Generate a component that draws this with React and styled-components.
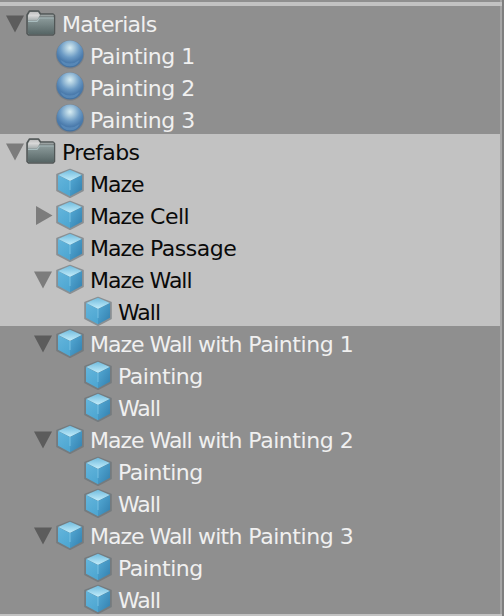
import React from "react";
import styled, { createGlobalStyle } from "styled-components";

const Global = createGlobalStyle`
  body { margin: 0; background: #8f8f8f; }
`;

const Panel = styled.div`
  width: 504px;
  height: 616px;
  display: flex;
  background: #8f8f8f;
  overflow: hidden;
`;

const Tree = styled.div`
  width: 500px;
  display: flex;
  flex-direction: column;
`;

const Edge = styled.div`
  width: 2px;
  background: #a6a6a6;
`;

const Gutter = styled.div`
  width: 2px;
  background: #7f7f7f;
`;

const TopLine = styled.div`
  height: 4px;
  margin: 2px -2px 0 0;
  background: #c2c2c2;
  flex: none;
  z-index: 1;
`;

const BottomLine = styled.div`
  height: 2px;
  margin-right: -2px;
  background: #c2c2c2;
  flex: none;
  z-index: 1;
`;

const Group = styled.div`
  flex: none;
  background: ${(p) => (p.$light ? "#c2c2c2" : "#8f8f8f")};
  color: ${(p) => (p.$light ? "#0a0a0a" : "#f0f0f0")};
`;

const Row = styled.div`
  height: 32px;
  display: flex;
  align-items: flex-start;
  padding-left: ${(p) => p.$indent}px;
`;

const ArrowSlot = styled.div`
  width: 20px;
  height: 32px;
  flex: none;
  color: ${(p) => (p.$light ? "#7c7c7c" : "#5c5c5c")};
`;

const IconSlot = styled.div`
  box-sizing: border-box;
  width: 36px;
  height: 32px;
  flex: none;
  padding-left: ${(p) => p.$inset}px;
`;

const Drawing = styled.svg`
  display: block;
  overflow: visible;
`;

const Label = styled.span`
  padding-top: 3px;
  font: 22px/32px "DejaVu Sans", sans-serif;
  white-space: pre;
`;

const Word = styled.span`
  letter-spacing: ${(p) => p.$track}px;
`;

function Arrow({ open }) {
  return (
    <Drawing width="20" height="32" viewBox="0 0 20 32">
      <path d={open ? "M0 9.5H18L9 26.5Z" : "M2 8V27L18.5 17.5Z"} fill="currentColor" />
    </Drawing>
  );
}

function Folder() {
  return (
    <Drawing width="30" height="32" viewBox="0 0 30 32">
      <defs>
        <linearGradient id="folderFront" x1="0" y1="0" x2="0" y2="1">
          <stop offset="0" stopColor="#8a9999" />
          <stop offset="1" stopColor="#566565" />
        </linearGradient>
        <linearGradient id="folderTab" x1="0" y1="0" x2="0" y2="1">
          <stop offset="0" stopColor="#c0c0c0" />
          <stop offset="0.4" stopColor="#d8d8d8" />
          <stop offset="1" stopColor="#a5adad" />
        </linearGradient>
      </defs>
      <path d="M1 9L3.5 5H12.5L14.5 8H27L28.5 9.5V27.5L27 29H2.5L1 27.5Z" fill="#7d8686" stroke="#505656" strokeWidth="1.5" strokeLinejoin="round" />
      <path d="M2 9.5L4 6H12L14 9L11 14.5H2Z" fill="url(#folderTab)" />
      <path d="M14.5 9.3H27.7" stroke="#a2a8a8" strokeWidth="1" />
      <path d="M2 15.5H11L13.5 12.5H28V27L26.5 28.3H3.5L2 27Z" fill="url(#folderFront)" />
      <path d="M2 15.3H11L13.5 12H28" fill="none" stroke="#a9bdbf" strokeWidth="1.2" />
    </Drawing>
  );
}

function Sphere() {
  return (
    <Drawing width="30" height="32" viewBox="0 0 30 32">
      <defs>
        <radialGradient id="ballShade" cx="0.5" cy="0.27" r="0.75">
          <stop offset="0" stopColor="#d8edf3" />
          <stop offset="0.2" stopColor="#acccdf" />
          <stop offset="0.48" stopColor="#6c9bc5" />
          <stop offset="0.72" stopColor="#4c7cad" />
          <stop offset="1" stopColor="#42709f" />
        </radialGradient>
      </defs>
      <circle cx="14" cy="16.5" r="14.2" fill="#70777e" opacity="0.6" />
      <circle cx="14" cy="16" r="13.4" fill="url(#ballShade)" />
      <path d="M4.5 22Q14 29 23.5 22Q21 28.3 14 28.3Q7 28.3 4.5 22Z" fill="#6a9dcb" opacity="0.45" />
    </Drawing>
  );
}

function Cube() {
  return (
    <Drawing width="30" height="32" viewBox="0 0 30 32">
      <defs>
        <linearGradient id="cubeTop" x1="0" y1="0" x2="0" y2="1">
          <stop offset="0" stopColor="#70bbdd" />
          <stop offset="1" stopColor="#c4eefc" />
        </linearGradient>
        <linearGradient id="cubeLeft" x1="0" y1="0" x2="0.5" y2="1">
          <stop offset="0" stopColor="#64b5dc" />
          <stop offset="1" stopColor="#4fa7d2" />
        </linearGradient>
        <linearGradient id="cubeRight" x1="0" y1="0" x2="1" y2="1">
          <stop offset="0" stopColor="#55abd6" />
          <stop offset="1" stopColor="#327fae" />
        </linearGradient>
      </defs>
      <path d="M14 3.5L27 8.5V24.5L14 31.3L1 24.5V8.5Z" fill="#646e74" stroke="#646e74" strokeWidth="1.6" strokeLinejoin="round" opacity="0.6" />
      <path d="M14 3.8L26 9L14 15L2 9Z" fill="url(#cubeTop)" />
      <path d="M2 9L14 15V30.2L2 23.8Z" fill="url(#cubeLeft)" />
      <path d="M26 9L14 15V30.2L26 23.8Z" fill="url(#cubeRight)" />
      <path d="M14 15V24" stroke="#80c6e7" strokeWidth="0.8" />
    </Drawing>
  );
}

const icons = { folder: Folder, sphere: Sphere, cube: Cube };
const indents = [6, 34, 62];
const tracking = { Maze: -1, Wall: -1, Materials: -0.7, Prefabs: -0.6, with: -0.7, Painting: -0.45 };

function Item({ depth, icon, label, open, light }) {
  const Icon = icons[icon];
  return (
    <Row $indent={indents[depth]}>
      <ArrowSlot $light={light}>
        {open !== undefined && <Arrow open={open} />}
      </ArrowSlot>
      <IconSlot $inset={icon === "folder" ? 0 : 2}>
        <Icon />
      </IconSlot>
      <Label>
        {label.split(" ").map((word, i) => (
          <Word key={i} $track={tracking[word] ?? -0.5}>
            {i ? ` ${word}` : word}
          </Word>
        ))}
      </Label>
    </Row>
  );
}

const groups = [
  {
    light: false,
    items: [
      { depth: 0, icon: "folder", label: "Materials", open: true },
      { depth: 1, icon: "sphere", label: "Painting 1" },
      { depth: 1, icon: "sphere", label: "Painting 2" },
      { depth: 1, icon: "sphere", label: "Painting 3" },
    ],
  },
  {
    light: true,
    items: [
      { depth: 0, icon: "folder", label: "Prefabs", open: true },
      { depth: 1, icon: "cube", label: "Maze" },
      { depth: 1, icon: "cube", label: "Maze Cell", open: false },
      { depth: 1, icon: "cube", label: "Maze Passage" },
      { depth: 1, icon: "cube", label: "Maze Wall", open: true },
      { depth: 2, icon: "cube", label: "Wall" },
    ],
  },
  {
    light: false,
    items: [1, 2, 3].flatMap((n) => [
      { depth: 1, icon: "cube", label: `Maze Wall with Painting ${n}`, open: true },
      { depth: 2, icon: "cube", label: "Painting" },
      { depth: 2, icon: "cube", label: "Wall" },
    ]),
  },
];

export default function App() {
  return (
    <Panel>
      <Global />
      <Tree>
        <TopLine />
        {groups.map((g, i) => (
          <Group key={i} $light={g.light}>
            {g.items.map((item, j) => (
              <Item key={j} {...item} light={g.light} />
            ))}
          </Group>
        ))}
        <BottomLine />
      </Tree>
      <Edge />
      <Gutter />
    </Panel>
  );
}
